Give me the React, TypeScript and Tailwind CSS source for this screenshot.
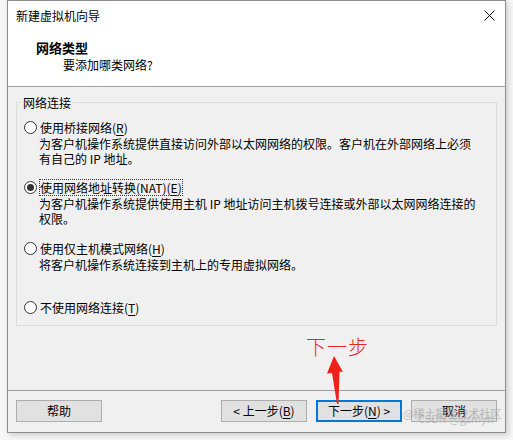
import React from 'react';

const font = { fontFamily: '"Noto Sans CJK SC", "Microsoft YaHei", sans-serif' };

function Radio({ checked }: { checked?: boolean }) {
  return (
    <span className="w-[13px] h-[13px] rounded-full border border-[#333] bg-white flex items-center justify-center shrink-0">
      {checked && <span className="w-[7px] h-[7px] rounded-full bg-[#333]" />}
    </span>
  );
}

function Option({
  label,
  keyChar,
  checked,
  focused,
  lines,
}: {
  label: string;
  keyChar: string;
  checked?: boolean;
  focused?: boolean;
  lines?: string[];
}) {
  return (
    <div>
      <div className="flex items-center h-[15px] pl-[7px] gap-[3px]">
        <Radio checked={checked} />
        <span className={`leading-[15px] ${focused ? 'outline outline-1 outline-dotted outline-[#333]' : ''}`}>
          {label}(<span className="underline underline-offset-2">{keyChar}</span>)
        </span>
      </div>
      {lines && (
        <div className="mt-[1px] pl-[22px]">
          {lines.map((l) => (
            <div key={l} className="leading-[15px] whitespace-nowrap">
              {l}
            </div>
          ))}
        </div>
      )}
    </div>
  );
}

function Button({ children, primary }: { children: React.ReactNode; primary?: boolean }) {
  return (
    <button
      className={`w-[86px] h-[22px] bg-[#e1e1e1] text-[12px] leading-none text-black flex items-center justify-center ${
        primary ? 'border-2 border-[#0078d7]' : 'border border-[#adadad]'
      }`}
    >
      {children}
    </button>
  );
}

export default function App() {
  return (
    <div className="w-[513px] h-[440px] bg-[#f7f7f7] relative overflow-hidden text-[12px] text-black" style={font}>
      <div className="ml-[7px] w-[499px] h-[433px] border border-[#8c8c8c] flex flex-col shadow-[2px_2px_6px_rgba(0,0,0,0.18)]">
        {/* Title bar */}
        <div className="h-[29px] bg-white flex items-center justify-between pl-[8px] pr-[10px]">
          <span className="leading-[15px]">新建虚拟机向导</span>
          <svg width="11" height="11" viewBox="0 0 11 11">
            <path d="M0.5 0.5 L10.5 10.5 M10.5 0.5 L0.5 10.5" stroke="#111" strokeWidth="1" />
          </svg>
        </div>

        {/* Header */}
        <div className="h-[57px] bg-white border-b border-[#a0a0a0] pt-[10px]">
          <div className="pl-[28px] font-bold text-[13px] leading-[15px]">网络类型</div>
          <div className="pl-[55px] mt-[2px] leading-[15px]">要添加哪类网络?</div>
        </div>

        {/* Body */}
        <div className="flex-1 bg-[#f0f0f0] flex flex-col">
          <div className="h-[304px] px-[8px] pt-[8px] border-b border-[#a0a0a0]">
            <fieldset className="border border-[#dcdcdc] px-0 pb-[10px]">
              <legend className="ml-[4px] px-[2px] leading-[15px]">网络连接</legend>
              <div className="mt-[10px] flex flex-col">
                <Option
                  label="使用桥接网络"
                  keyChar="R"
                  lines={[
                    '为客户机操作系统提供直接访问外部以太网网络的权限。客户机在外部网络上必须',
                    '有自己的 IP 地址。',
                  ]}
                />
                <div className="h-[14px]" />
                <Option
                  label="使用网络地址转换(NAT)"
                  keyChar="E"
                  checked
                  focused
                  lines={[
                    '为客户机操作系统提供使用主机 IP 地址访问主机拨号连接或外部以太网网络连接的',
                    '权限。',
                  ]}
                />
                <div className="h-[15px]" />
                <Option label="使用仅主机模式网络" keyChar="H" lines={['将客户机操作系统连接到主机上的专用虚拟网络。']} />
                <div className="h-[28px]" />
                <Option label="不使用网络连接" keyChar="T" />
              </div>
            </fieldset>
          </div>

          {/* Buttons */}
          <div className="flex-1 flex items-center justify-between px-[8px] pb-[1px]">
            <Button>帮助</Button>
            <div className="flex gap-[9px]">
              <Button>
                &lt; 上一步(<span className="underline underline-offset-2">B</span>)
              </Button>
              <Button primary>
                下一步(<span className="underline underline-offset-2">N</span>) &gt;
              </Button>
              <Button>取消</Button>
            </div>
          </div>
        </div>
      </div>

      {/* Red annotation */}
      <div className="absolute left-[306px] top-[335px] text-[20px] leading-[24px] font-light text-[#e8261d] tracking-[1px]">
        下一步
      </div>
      <svg className="absolute left-0 top-0" width="513" height="440" viewBox="0 0 513 440">
        <polygon points="334,356 343,372 339.5,371.5 338.5,404 337,404 332,373 327,373.5" fill="#f0201a" />
      </svg>

      {/* Watermark */}
      <div className="absolute left-[418px] top-[411px] text-[11px] leading-[14px] text-[#b4b4b4] opacity-80 whitespace-nowrap">
        CSDN @gzmyh
      </div>
      <div className="absolute left-[403px] top-[406px] text-[11px] leading-[14px] text-[#9a9a9a] opacity-60 whitespace-nowrap">
        @稀土掘金技术社区
      </div>
    </div>
  );
}
